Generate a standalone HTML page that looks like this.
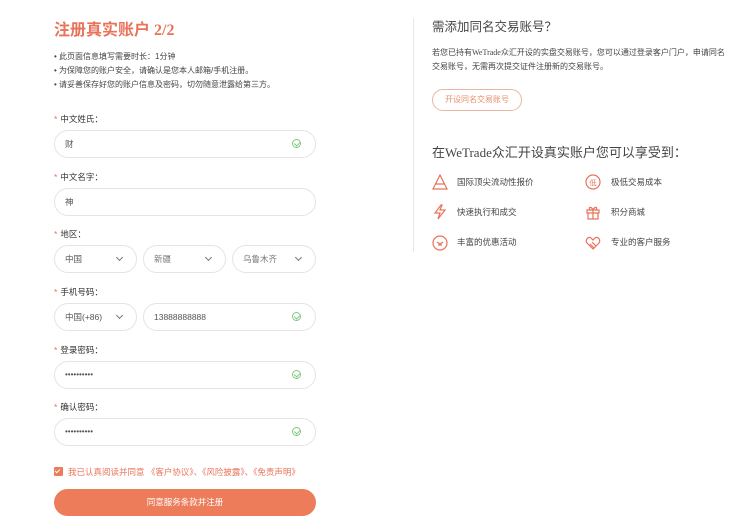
<!DOCTYPE html><html><head><meta charset="utf-8"><style>
*{margin:0;padding:0;box-sizing:border-box}
body{width:745px;height:529px;background:#fff;font-family:"Liberation Sans","Noto Sans CJK SC",sans-serif;color:#333;position:relative;overflow:hidden}
.a{position:absolute;white-space:nowrap}
.t{left:54px;top:16px;font-size:16px;font-weight:bold;color:#e8735a;font-family:"Liberation Serif","Noto Sans CJK SC",serif}
.b{left:54px;font-size:8px;color:#444}
.l{left:54px;font-size:8.5px;color:#333}
.l i{color:#e8735a;font-style:normal;margin-right:3px}
.in{position:absolute;height:28px;border:1px solid #e4e4e4;border-radius:14px;font-size:8.5px;color:#555;padding-left:10px;line-height:26px}
.chk{position:absolute;right:14px;top:8px;width:9px;height:9px;border:1px solid #7ec97e;border-radius:50%}
.chk:after{content:"";position:absolute;left:2px;top:1px;width:3px;height:4px;border:solid #7ec97e;border-width:0 1px 1px 0;transform:rotate(45deg)}
.dd{position:absolute;right:14px;top:9px;width:5px;height:5px;border:solid #777;border-width:0 1px 1px 0;transform:rotate(45deg)}
.r{font-size:8.5px;color:#444}
.ic{position:absolute;width:16px;height:16px}
</style></head><body>
<div class="a t">注册真实账户 2/2</div>
<div class="a b" style="top:51px">• 此页面信息填写需要时长：1分钟</div>
<div class="a b" style="top:65px">• 为保障您的账户安全，请确认是您本人邮箱/手机注册。</div>
<div class="a b" style="top:79px">• 请妥善保存好您的账户信息及密码，切勿随意泄露给第三方。</div>

<div class="a l" style="top:113px"><i>*</i>中文姓氏：</div>
<div class="in" style="left:54px;top:130px;width:262px">财<span class="chk"></span></div>
<div class="a l" style="top:171px"><i>*</i>中文名字：</div>
<div class="in" style="left:54px;top:188px;width:262px">神</div>
<div class="a l" style="top:228px"><i>*</i>地区：</div>
<div class="in" style="left:54px;top:245px;width:83px">中国<span class="dd"></span></div>
<div class="in" style="left:143px;top:245px;width:83px;color:#777">新疆<span class="dd"></span></div>
<div class="in" style="left:232px;top:245px;width:84px;color:#777">乌鲁木齐<span class="dd"></span></div>
<div class="a l" style="top:286px"><i>*</i>手机号码：</div>
<div class="in" style="left:54px;top:303px;width:83px">中国(+86)<span class="dd"></span></div>
<div class="in" style="left:143px;top:303px;width:173px">13888888888<span class="chk"></span></div>
<div class="a l" style="top:344px"><i>*</i>登录密码：</div>
<div class="in" style="left:54px;top:361px;width:262px;font-size:8px">••••••••••<span class="chk"></span></div>
<div class="a l" style="top:401px"><i>*</i>确认密码：</div>
<div class="in" style="left:54px;top:418px;width:262px;font-size:8px">••••••••••<span class="chk"></span></div>

<div class="a" style="left:54px;top:467px;width:9px;height:9px;background:#ec7c5a;border-radius:1px"></div>
<div class="a" style="left:56px;top:468px;width:3px;height:5px;border:solid #fff;border-width:0 1px 1px 0;transform:rotate(45deg)"></div>
<div class="a" style="left:68px;top:466px;font-size:8.5px;color:#e8735a">我已认真阅读并同意 《客户协议》、《风险披露》、《免责声明》</div>
<div class="a" style="left:54px;top:489px;width:262px;height:27px;background:#ec7c5a;border-radius:14px;color:#fff;font-size:8.5px;text-align:center;line-height:27px">同意服务条款并注册</div>

<div class="a" style="left:413px;top:18px;width:1px;height:234px;background:#e8e8e8"></div>
<div class="a" style="left:432px;top:16px;font-size:12.5px;color:#444">需添加同名交易账号？</div>
<div class="a r" style="left:432px;top:47px;font-size:8px;font-family:'Liberation Serif','Noto Sans CJK SC',serif">若您已持有WeTrade众汇开设的实盘交易账号，您可以通过登录客户门户，申请同名</div>
<div class="a r" style="left:432px;top:61px;font-size:8px">交易账号，无需再次提交证件注册新的交易账号。</div>
<div class="a" style="left:432px;top:89px;width:90px;height:22px;border:1px solid #ecb5a3;border-radius:11px;font-size:8px;color:#e8906f;text-align:center;line-height:20px">开设同名交易账号</div>
<div class="a" style="left:432px;top:142px;font-size:13px;color:#444;font-family:'Liberation Serif','Noto Sans CJK SC',serif">在WeTrade众汇开设真实账户您可以享受到：</div>

<svg class="ic" style="left:432px;top:174px" viewBox="0 0 16 16" fill="none" stroke="#e8735a" stroke-width="1.2"><path d="M8 1L1 15H15Z M3.5 10H12.5"/></svg>
<div class="a r" style="left:457px;top:176px">国际顶尖流动性报价</div>
<svg class="ic" style="left:585px;top:174px" viewBox="0 0 16 16" fill="none" stroke="#e8735a" stroke-width="1.2"><circle cx="8" cy="8" r="7"/><text x="8" y="11" font-size="7" fill="#e8735a" stroke="none" text-anchor="middle">低</text></svg>
<div class="a r" style="left:611px;top:176px">极低交易成本</div>
<svg class="ic" style="left:432px;top:204px" viewBox="0 0 16 16" fill="none" stroke="#e8735a" stroke-width="1.2"><path d="M9 1L3 9H8L6 15L13 6H8L10 1Z"/></svg>
<div class="a r" style="left:457px;top:206px">快速执行和成交</div>
<svg class="ic" style="left:585px;top:204px" viewBox="0 0 16 16" fill="none" stroke="#e8735a" stroke-width="1.2"><path d="M2 6H14V9H2Z M3 9V15H13V9 M8 6V15 M8 6C6 2 3 3 5 6 M8 6C10 2 13 3 11 6"/></svg>
<div class="a r" style="left:611px;top:206px">积分商城</div>
<svg class="ic" style="left:432px;top:235px" viewBox="0 0 16 16" fill="none" stroke="#e8735a" stroke-width="1.2"><circle cx="8" cy="8" r="7"/><path d="M5 7L8 9L11 7 M6 10H10"/></svg>
<div class="a r" style="left:457px;top:236px">丰富的优惠活动</div>
<svg class="ic" style="left:585px;top:235px" viewBox="0 0 16 16" fill="none" stroke="#e8735a" stroke-width="1.2"><path d="M8 14L2 8C0 5 3 1 6 3L8 5L10 3C13 1 16 5 14 8Z M5 9L9 13 M7 7L11 11"/></svg>
<div class="a r" style="left:611px;top:236px">专业的客户服务</div>
</body></html>
